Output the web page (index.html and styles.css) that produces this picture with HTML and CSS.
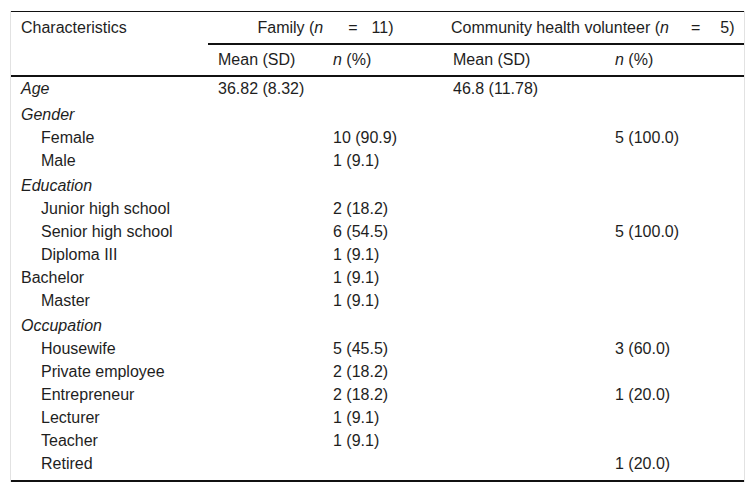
FILE: index.html
```html
<!DOCTYPE html>
<html lang="en">
<head>
<meta charset="utf-8">
<title>Characteristics table</title>
<link rel="stylesheet" href="styles.css">
</head>
<body>
<div class="frame">
<table class="tbl">
<colgroup>
<col class="c1"><col class="c2"><col class="c3"><col class="c4"><col class="c5">
</colgroup>
<thead>
<tr class="h1">
<th rowspan="2" class="lead">Characteristics</th>
<th colspan="2" class="grp">Family (<i>n</i><span class="eq eq-f">=</span>11)</th>
<th colspan="2" class="grp grp-c">Community health volunteer (<i>n</i><span class="eq eq-c">=</span>5)</th>
</tr>
<tr class="h2">
<th>Mean (SD)</th>
<th><i>n</i> (%)</th>
<th>Mean (SD)</th>
<th><i>n</i> (%)</th>
</tr>
</thead>
<tbody>
<tr><td><i>Age</i></td><td>36.82 (8.32)</td><td></td><td>46.8 (11.78)</td><td></td></tr>
<tr class="cat first-cat"><td><i>Gender</i></td><td></td><td></td><td></td><td></td></tr>
<tr><td class="sub">Female</td><td></td><td>10 (90.9)</td><td></td><td>5 (100.0)</td></tr>
<tr><td class="sub">Male</td><td></td><td>1 (9.1)</td><td></td><td></td></tr>
<tr class="cat"><td><i>Education</i></td><td></td><td></td><td></td><td></td></tr>
<tr><td class="sub">Junior high school</td><td></td><td>2 (18.2)</td><td></td><td></td></tr>
<tr><td class="sub">Senior high school</td><td></td><td>6 (54.5)</td><td></td><td>5 (100.0)</td></tr>
<tr><td class="sub">Diploma III</td><td></td><td>1 (9.1)</td><td></td><td></td></tr>
<tr><td>Bachelor</td><td></td><td>1 (9.1)</td><td></td><td></td></tr>
<tr><td class="sub">Master</td><td></td><td>1 (9.1)</td><td></td><td></td></tr>
<tr class="cat"><td><i>Occupation</i></td><td></td><td></td><td></td><td></td></tr>
<tr><td class="sub">Housewife</td><td></td><td>5 (45.5)</td><td></td><td>3 (60.0)</td></tr>
<tr><td class="sub">Private employee</td><td></td><td>2 (18.2)</td><td></td><td></td></tr>
<tr><td class="sub">Entrepreneur</td><td></td><td>2 (18.2)</td><td></td><td>1 (20.0)</td></tr>
<tr><td class="sub">Lecturer</td><td></td><td>1 (9.1)</td><td></td><td></td></tr>
<tr><td class="sub">Teacher</td><td></td><td>1 (9.1)</td><td></td><td></td></tr>
<tr class="last"><td class="sub">Retired</td><td></td><td></td><td></td><td>1 (20.0)</td></tr>
</tbody>
</table>
</div>
</body>
</html>
```

FILE: styles.css
```css
html, body {
  margin: 0;
  padding: 0;
  background: #fff;
}
body {
  font-family: "Liberation Sans", Arial, sans-serif;
  font-size: 16px;
  color: #1e1e1e;
}
.frame {
  margin: 11px 10px 0 10px;
  border-left: 1px solid #e2e2e2;
  border-right: 1px solid #e2e2e2;
}
.tbl {
  width: 100%;
  table-layout: fixed;
  border-collapse: separate;
  border-spacing: 0;
  border-top: 1px solid #111;
  border-bottom: 2px solid #111;
}
.c1 { width: 197px; }
.c2 { width: 115px; }
.c3 { width: 120px; }
.c4 { width: 162px; }
.c5 { width: 139px; }
th, td {
  font-weight: normal;
  text-align: left;
  vertical-align: top;
  line-height: 19px;
  padding: 2px 4px 2px 10px;
  white-space: nowrap;
}
.h1 th {
  padding-top: 6px;
  padding-bottom: 6px;
}
.h1 .grp {
  text-align: center;
  padding-left: 10px;
  padding-right: 10px;
  border-bottom: 2px solid #111;
}
.h1 .grp-c {
  padding-left: 8px;
  padding-right: 12px;
}
.h1 .lead {
  border-bottom: 2px solid #111;
}
.h2 th {
  padding-top: 5px;
  padding-bottom: 6px;
  border-bottom: 2px solid #111;
}
.eq-f { margin: 0 14px 0 25px; }
.eq-c { margin: 0 20px 0 22px; }
.cat td {
  padding-top: 4px;
}
.first-cat td {
  padding-top: 5px;
}
.sub {
  padding-left: 30px;
}
.last td {
  padding-bottom: 7px;
}
```
